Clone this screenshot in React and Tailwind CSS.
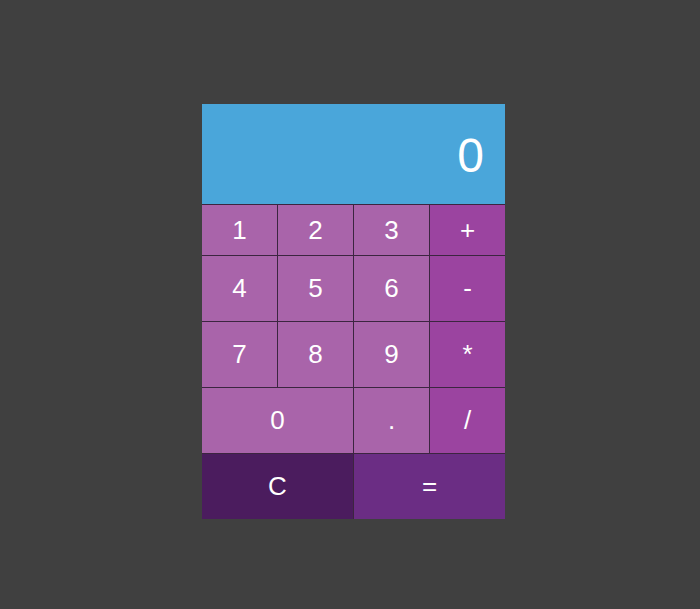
import React, { useState } from "react";

const numBtn = "bg-[#a964aa]";
const opBtn = "bg-[#9b44a0]";

export default function App() {
  const [display] = useState("0");

  const keys = [
    { label: "1", cls: numBtn },
    { label: "2", cls: numBtn },
    { label: "3", cls: numBtn },
    { label: "+", cls: opBtn },
    { label: "4", cls: numBtn },
    { label: "5", cls: numBtn },
    { label: "6", cls: numBtn },
    { label: "-", cls: opBtn },
    { label: "7", cls: numBtn },
    { label: "8", cls: numBtn },
    { label: "9", cls: numBtn },
    { label: "*", cls: opBtn },
    { label: "0", cls: `${numBtn} col-span-2` },
    { label: ".", cls: numBtn },
    { label: "/", cls: opBtn },
    { label: "C", cls: "bg-[#4b1c5e] col-span-2" },
    { label: "=", cls: "bg-[#6b2d84] col-span-2" },
  ];

  return (
    <div className="min-h-[609px] w-full bg-[#404040] flex justify-center pl-[7px] pt-[104px] font-['Liberation_Sans',Arial,sans-serif]">
      <div className="w-[303px] h-[415px] grid grid-cols-4 grid-rows-[100px_50px_65px_65px_65px_65px] gap-px bg-[#3c2540]">
        {/* Display */}
        <div className="col-span-4 bg-[#4aa6da] flex items-center justify-end pr-[21px] pt-[4px] text-white text-[48px]">
          {display}
        </div>

        {keys.map((k) => (
          <button
            key={k.label}
            className={`${k.cls} flex items-center justify-center text-white text-[26px] cursor-pointer`}
          >
            {k.label}
          </button>
        ))}
      </div>
    </div>
  );
}
